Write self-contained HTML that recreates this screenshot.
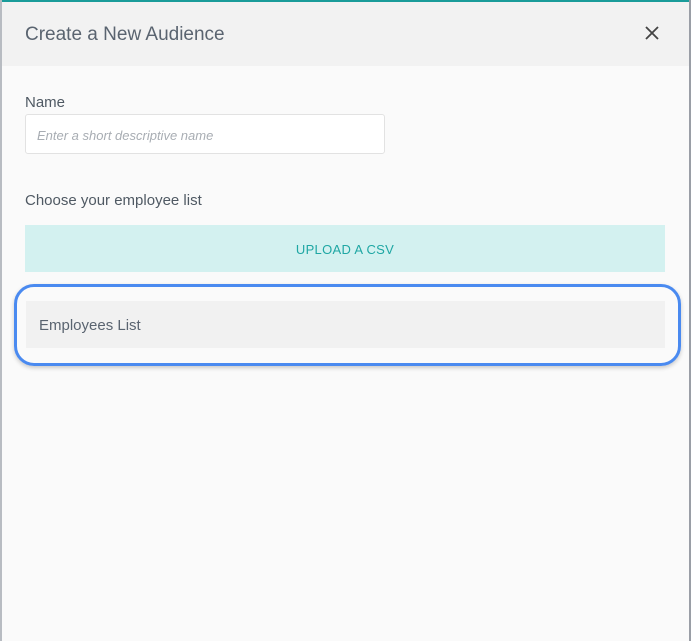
<!DOCTYPE html>
<html><head><style>
html,body{margin:0;padding:0;width:691px;height:641px;overflow:hidden;background:#fafafa;font-family:"Liberation Sans",sans-serif;}
.frame{position:absolute;left:0;top:0;width:691px;height:641px;}
.top{position:absolute;left:0;top:0;width:691px;height:2px;background:#1a9c9a;}
.lb{position:absolute;left:0;top:0;width:2px;height:641px;background:#b8bcc2;}
.rb{position:absolute;right:0;top:0;width:2px;height:641px;background:#9a9ea6;}
.hdr{position:absolute;left:2px;top:2px;width:687px;height:64px;background:#f2f2f2;}
.title{position:absolute;left:25px;top:24px;font-size:19px;color:#5a6470;}
.x{position:absolute;left:645px;top:26px;}
.lbl{position:absolute;left:25px;font-size:15px;color:#4f5963;}
.inp{position:absolute;left:25px;top:114px;width:358px;height:38px;border:1px solid #e2e2e2;border-radius:3px;background:#fff;}
.inp span{position:absolute;left:11px;top:13px;font-size:13px;font-style:italic;color:#a8adb3;}
.up{position:absolute;left:25px;top:225px;width:640px;height:47px;background:#d3f1f0;color:#1fa7a4;font-size:13px;text-align:center;line-height:49px;letter-spacing:.3px;}
.emp{position:absolute;left:26px;top:301px;width:639px;height:47px;background:#f1f1f1;}
.emp span{position:absolute;left:13px;top:16px;font-size:15px;color:#5a6470;}
.ring{position:absolute;left:14px;top:284px;width:667px;height:82px;border:3px solid #4a8af0;border-radius:20px;box-sizing:border-box;box-shadow:0 2px 4px rgba(0,0,0,.2);}
</style></head><body>
<div class="frame">
<div class="hdr"></div>
<div class="top"></div><div class="lb"></div><div class="rb"></div>
<div class="title">Create a New Audience</div>
<svg class="x" width="14" height="14" viewBox="0 0 14 14"><path d="M1 1L13 13M13 1L1 13" stroke="#444" stroke-width="1.8"/></svg>
<div class="lbl" style="top:94px">Name</div>
<div class="inp"><span>Enter a short descriptive name</span></div>
<div class="lbl" style="top:192px">Choose your employee list</div>
<div class="up">UPLOAD A CSV</div>
<div class="emp"><span>Employees List</span></div>
<div class="ring"></div>
</div>
</body></html>
